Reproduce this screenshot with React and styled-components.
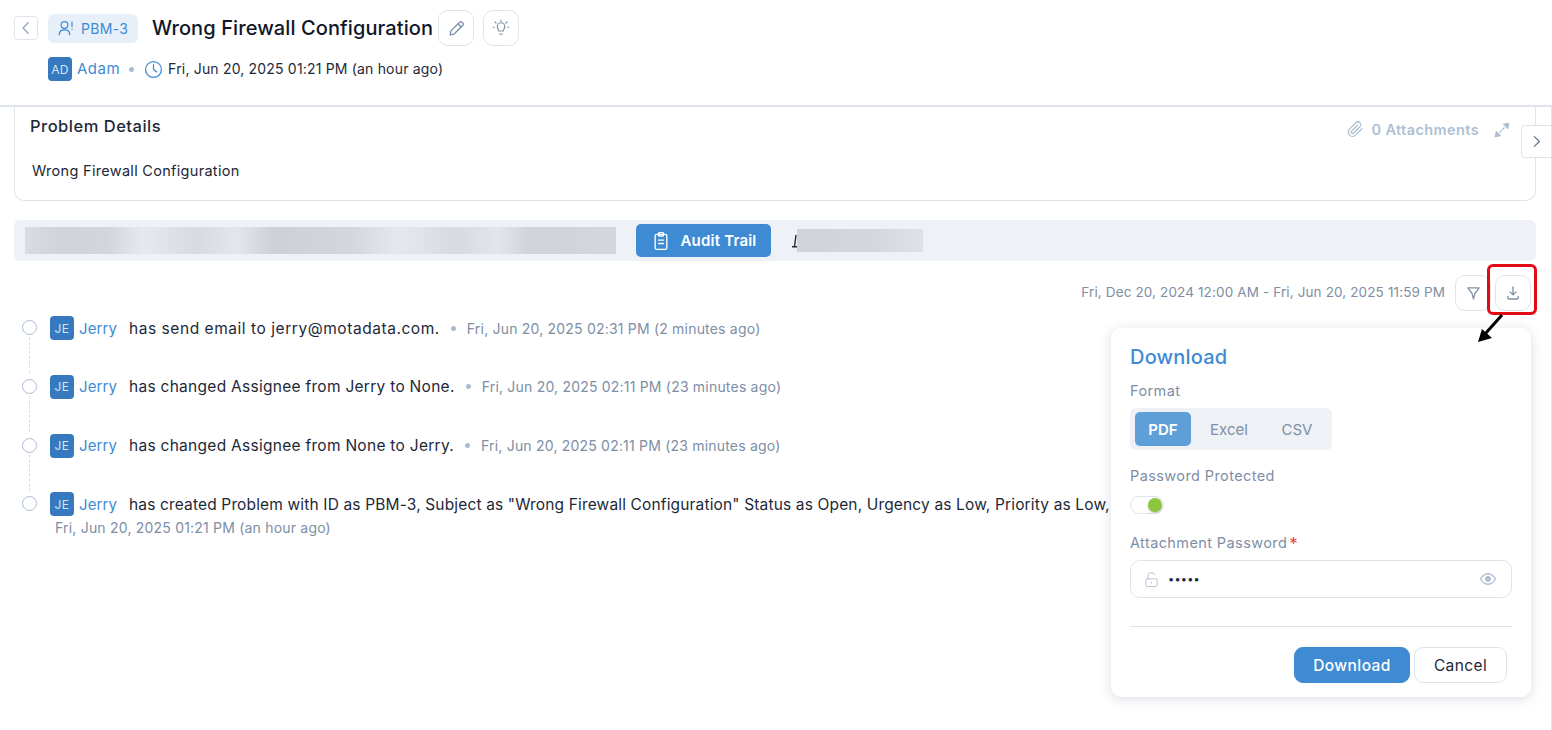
import React from 'react'
import styled, { createGlobalStyle } from 'styled-components'

const GlobalStyle = createGlobalStyle`
html, body { margin: 0; padding: 0; background: #fff; }
body { font-family: Inter, "Noto Sans", sans-serif; color: #1d2939; overflow: hidden; }
* { box-sizing: border-box; }
`

const Page = styled.div`
  position: relative;
  width: 1552px;
  height: 730px;
  overflow: hidden;
`

const Header = styled.header`
  height: 107px;
  padding: 10px 0 0 14px;
  border-bottom: 2px solid #dfe4ec;
`

const TitleRow = styled.div`
  display: flex;
  align-items: center;
  height: 36px;
`

const BackButton = styled.button`
  width: 24px;
  height: 24px;
  padding: 0;
  margin: 0 10px 0 0;
  display: flex;
  align-items: center;
  justify-content: center;
  background: #fff;
  border: 1px solid #dfe4ec;
  border-radius: 4px;
  color: #8ea0b8;
`

const Badge = styled.div`
  width: 90px;
  height: 29px;
  display: flex;
  align-items: center;
  gap: 6px;
  padding-left: 9px;
  margin-right: 14px;
  background: #e7eff9;
  border-radius: 6px;
  color: #3e8bd4;
  font-size: 14px;
  letter-spacing: 0.3px;
`

const Title = styled.h1`
  margin: 0 5px 0 0;
  font-size: 20px;
  font-weight: 500;
  color: #101828;
  letter-spacing: 0.1px;
  white-space: nowrap;
`

const IconButton = styled.button`
  width: 36px;
  height: 36px;
  margin-left: ${p => p.$gap || 0}px;
  padding: 0;
  display: flex;
  align-items: center;
  justify-content: center;
  background: #fff;
  border: 1px solid #dfe4ec;
  border-radius: 10px;
  color: #7f91a8;
`

const MetaRow = styled.div`
  display: flex;
  align-items: center;
  height: 24px;
  margin: 11px 0 0 34px;
  font-size: 14px;
  color: #1d2939;
`

const MetaDate = styled.span`
  padding-bottom: 2px;
  letter-spacing: 0.18px;
`

const ClockIcon = styled.span`
  display: flex;
  color: #3e8bd4;
  margin-right: 5px;
`

const Avatar = styled.span`
  width: 24px;
  height: 24px;
  flex: none;
  display: inline-flex;
  align-items: center;
  justify-content: center;
  background: #3679bf;
  border-radius: 4px;
  color: #d5e5f5;
  font-size: 12px;
  letter-spacing: 0.4px;
`

const UserName = styled.span`
  color: #3e8bd4;
  font-size: 15px;
  margin-left: 5px;
  letter-spacing: ${p => (p.$wide ? 0.5 : 0.1)}px;
  padding-bottom: ${p => (p.$wide ? 2 : 0)}px;
`

const Dot = styled.span`
  width: 5px;
  height: 5px;
  flex: none;
  border-radius: 50%;
  background: #a9bcd3;
  margin: 0 ${p => p.$right || 10}px 0 ${p => p.$left || 9}px;
`

const Content = styled.main`
  height: 623px;
  padding: 0 15px 0 14px;
  border-right: 1px solid #dfe4ec;
`

const DetailsCard = styled.section`
  height: 94px;
  padding: 8px 25px 0 15px;
  border: 1px solid #dfe4ec;
  border-top: 0;
  border-radius: 0 0 10px 10px;
`

const DetailsHead = styled.div`
  display: flex;
  align-items: center;
  justify-content: space-between;
  height: 22px;
`

const DetailsTitle = styled.h2`
  margin: 0;
  font-size: 16.5px;
  font-weight: 500;
  letter-spacing: 0.5px;
  color: #1d2939;
`

const Attachments = styled.div`
  display: flex;
  align-items: center;
  gap: 7px;
  margin-top: 7px;
  color: #aebfd4;
  font-size: 14.5px;
  font-weight: 600;
  letter-spacing: 0.4px;
`

const ExpandIcon = styled.span`
  display: flex;
  margin-left: 8px;
  color: #aebfd4;
`

const DetailsText = styled.p`
  margin: 24px 0 0 2px;
  font-size: 14.5px;
  line-height: 20px;
  letter-spacing: 0.3px;
  color: #1d2939;
`

const TabBar = styled.nav`
  display: flex;
  align-items: center;
  height: 41px;
  margin-top: 19px;
  padding-left: 11px;
  background: #eef1f6;
  border-radius: 6px;
`

const BlurredTabs = styled.div`
  width: 591px;
  height: 27px;
  background: linear-gradient(90deg,
    #d9dce1 0%, #d1d4d9 5%, #d2d5da 14%, #e6e9ef 20%, #d7dadf 29%, #e3e6ec 36%,
    #cdd1d6 42%, #d3d6db 55%, #e5e8ee 63%, #d7dadf 73%, #e3e6ec 80%, #d0d3d8 85%, #d3d6da 100%);
`

const AuditButton = styled.button`
  width: 135px;
  height: 33px;
  margin-left: 20px;
  display: flex;
  align-items: center;
  justify-content: center;
  gap: 10px;
  padding: 0;
  background: #3e8bd4;
  border: 0;
  border-radius: 5px;
  color: #fff;
  font: 600 15px Inter, sans-serif;
  letter-spacing: 0.2px;
`

const ObscuredGlyph = styled.svg`
  flex: none;
  margin-left: 21px;
`

const BlurredTab = styled.div`
  width: 126px;
  height: 23px;
  background: linear-gradient(90deg, #d0d3d8, #d3d6db 60%, #dfe2e6);
`

const FilterRow = styled.div`
  display: flex;
  align-items: center;
  justify-content: flex-end;
  height: 36px;
  margin-top: 14px;
  padding-right: 5px;
`

const DateRange = styled.span`
  margin-right: 10px;
  padding-bottom: 2px;
  font-size: 13.5px;
  letter-spacing: 0.13px;
  color: #7d8ea5;
`

const Timeline = styled.ul`
  list-style: none;
  margin: 5.3px 0 0;
  padding: 0 0 0 8px;
`

const Entry = styled.li`
  position: relative;
  height: 58.7px;
  padding-left: 28px;
  &:not(:last-child)::after {
    content: '';
    position: absolute;
    left: 7px;
    top: 21px;
    height: 36px;
    border-left: 1px dashed #d8dee7;
  }
`

const Ring = styled.span`
  position: absolute;
  left: 0;
  top: 4px;
  width: 15px;
  height: 15px;
  border: 1px solid #a9bcd3;
  border-radius: 50%;
`

const EntryLine = styled.div`
  display: flex;
  align-items: center;
  height: 24px;
  font-size: 15.5px;
  white-space: nowrap;
`

const EntryText = styled.span`
  margin-left: 12px;
  letter-spacing: ${p => p.$track}px;
  color: #1d2939;
`

const Stamp = styled.span`
  font-size: 14px;
  letter-spacing: 0.2px;
  color: #7d8ea5;
`

const WrappedStamp = styled(Stamp)`
  display: block;
  margin: 3px 0 0 5px;
`

const Popover = styled.aside`
  position: absolute;
  left: 1111px;
  top: 328px;
  width: 420px;
  height: 369px;
  padding: 17px 19px 0 19px;
  background: #fff;
  border-radius: 10px;
  box-shadow: 0 2px 12px rgba(40, 60, 90, 0.18);
`

const PopoverTitle = styled.h3`
  margin: 0;
  font-size: 20px;
  line-height: 24px;
  font-weight: 500;
  letter-spacing: 0.2px;
  color: #3e8bd4;
`

const FieldLabel = styled.div`
  margin-top: ${p => p.$top}px;
  font-size: 14.5px;
  line-height: 20px;
  letter-spacing: 0.4px;
  color: #7d8ea5;
`

const Required = styled.span`
  color: #e5484d;
  margin-left: 2px;
  font-size: 17px;
  line-height: 14px;
  vertical-align: -2px;
`

const Segments = styled.div`
  display: flex;
  width: 202px;
  height: 42px;
  margin-top: 7px;
  padding: 4px 5px;
  background: #eef1f6;
  border-radius: 6px;
`

const Segment = styled.div`
  width: ${p => p.$width}px;
  display: flex;
  align-items: center;
  justify-content: center;
  border-radius: 5px;
  font-size: 15px;
  font-weight: ${p => (p.$active ? 600 : 400)};
  background: ${p => (p.$active ? '#5f9fd9' : 'transparent')};
  color: ${p => (p.$active ? '#fff' : '#7d8ea5')};
`

const Switch = styled.div`
  position: relative;
  width: 34px;
  height: 18px;
  margin-top: 10px;
  background: #fff;
  border: 1px solid #dfe4ec;
  border-radius: 9px;
  &::after {
    content: '';
    position: absolute;
    right: 1px;
    top: 1px;
    width: 14px;
    height: 14px;
    border-radius: 50%;
    background: #8cc63f;
    box-shadow: 0 1px 2px rgba(0, 0, 0, 0.25);
  }
`

const PasswordField = styled.div`
  display: flex;
  align-items: center;
  height: 38px;
  margin-top: 7px;
  padding: 0 14px 0 12px;
  border: 1px solid #dfe4ec;
  border-radius: 10px;
  color: #aebfd4;
`

const PasswordDots = styled.span`
  flex: 1;
  margin-left: 8px;
  font-size: 11px;
  letter-spacing: 0.2px;
  color: #1d2939;
`

const Divider = styled.hr`
  margin: 28px 0 0;
  border: 0;
  border-top: 1px solid #dfe4ec;
`

const Actions = styled.div`
  display: flex;
  justify-content: flex-end;
  gap: 4px;
  margin-top: 20px;
  padding-right: 5px;
`

const ActionButton = styled.button`
  width: ${p => p.$width}px;
  height: 36px;
  padding: 0;
  border-radius: 9px;
  font: ${p => (p.$primary ? 500 : 400)} 15.5px Inter, sans-serif;
  letter-spacing: 0.4px;
  border: 1px solid ${p => (p.$primary ? '#3e8bd4' : '#dfe4ec')};
  background: ${p => (p.$primary ? '#3e8bd4' : '#fff')};
  color: ${p => (p.$primary ? '#fff' : '#1d2939')};
`

const DrawerToggle = styled.button`
  position: absolute;
  right: 1px;
  top: 125px;
  width: 30px;
  height: 33px;
  padding: 0;
  display: flex;
  align-items: center;
  justify-content: center;
  background: #fff;
  border: 1px solid #dfe4ec;
  border-right: 0;
  border-radius: 4px 0 0 4px;
  color: #5f7088;
`

const Highlight = styled.div`
  position: absolute;
  left: 1487px;
  top: 264px;
  width: 50px;
  height: 51px;
  border: 3px solid #e30b13;
  border-radius: 6px;
`

const Pointer = styled.svg`
  position: absolute;
  left: 1472px;
  top: 312px;
`

const Svg = ({ size = 16, width = 1.6, children }) => (
  <svg width={size} height={size} viewBox="0 0 24 24" fill="none" stroke="currentColor"
    strokeWidth={width} strokeLinecap="round" strokeLinejoin="round">
    {children}
  </svg>
)

const entries = [
  { track: 0.55, text: 'has send email to jerry@motadata.com.', stamp: 'Fri, Jun 20, 2025 02:31 PM (2 minutes ago)' },
  { track: 0.28, text: 'has changed Assignee from Jerry to None.', stamp: 'Fri, Jun 20, 2025 02:11 PM (23 minutes ago)' },
  { track: 0.28, text: 'has changed Assignee from None to Jerry.', stamp: 'Fri, Jun 20, 2025 02:11 PM (23 minutes ago)' },
  {
    track: 0.15,
    text: 'has created Problem with ID as PBM-3, Subject as "Wrong Firewall Configuration" Status as Open, Urgency as Low, Priority as Low,',
    stamp: 'Fri, Jun 20, 2025 01:21 PM (an hour ago)',
    wrapped: true,
  },
]

const App = () => (
  <Page>
    <GlobalStyle />
    <Header>
      <TitleRow>
        <BackButton>
          <Svg size={18}><path d="M15 5l-7 7 7 7" /></Svg>
        </BackButton>
        <Badge>
          <Svg size={18}>
            <circle cx="10" cy="8" r="4.5" />
            <path d="M3 21c0-4 3-6.500 7-6.500s7 2.500 7 6.500" />
            <path d="M20 4v6M20 13v.5" />
          </Svg>
          PBM-3
        </Badge>
        <Title>Wrong Firewall Configuration</Title>
        <IconButton>
          <Svg size={19} width={1.7}>
            <path d="M4 20l1-5L16 4a2 2 0 0 1 3 0l1 1a2 2 0 0 1 0 3L9 19z" />
            <path d="M14 6l4 4" />
          </Svg>
        </IconButton>
        <IconButton $gap={9}>
          <Svg size={18} width={1.6}>
            <path d="M9 16c0-2-2-3-2-6a5 5 0 0 1 10 0c0 3-2 4-2 6z" />
            <path d="M10 20h4M12 1.500V3M4 4l1.500 1.500M20 4l-1.500 1.500M1.500 11H3M21 11h1.500" />
          </Svg>
        </IconButton>
      </TitleRow>
      <MetaRow>
        <Avatar>AD</Avatar>
        <UserName $wide>Adam</UserName>
        <Dot />
        <ClockIcon>
          <Svg size={19}>
            <circle cx="12" cy="12" r="10" />
            <path d="M12 6v6l4 3" />
          </Svg>
        </ClockIcon>
        <MetaDate>Fri, Jun 20, 2025 01:21 PM (an hour ago)</MetaDate>
      </MetaRow>
    </Header>

    <Content>
      <DetailsCard>
        <DetailsHead>
          <DetailsTitle>Problem Details</DetailsTitle>
          <Attachments>
            <Svg size={17} width={1.8}>
              <path d="M21 11l-9 9a6 6 0 0 1-8.500-8.500l9-9a4 4 0 0 1 5.700 5.700l-9 9a2 2 0 0 1-2.800-2.800l8.300-8.300" />
            </Svg>
            0 Attachments
            <ExpandIcon>
              <Svg size={16} width={2}>
                <path d="M22 2l-7.500 1.500 6 6zM2 22l7.500-1.500-6-6z" fill="currentColor" />
                <path d="M15 9l-2 2M11 13l-2 2" />
              </Svg>
            </ExpandIcon>
          </Attachments>
        </DetailsHead>
        <DetailsText>Wrong Firewall Configuration</DetailsText>
      </DetailsCard>

      <TabBar>
        <BlurredTabs />
        <AuditButton>
          <Svg size={20}>
            <rect x="5" y="4" width="14" height="18" rx="2" />
            <rect x="9" y="2" width="6" height="4" rx="1" />
            <path d="M9 11h6M9 15h6" />
          </Svg>
          Audit Trail
        </AuditButton>
        <ObscuredGlyph width="5" height="14" viewBox="0 0 5 14">
          <path d="M4 1L2.500 12.500M0 12.800h5" stroke="#1d2939" strokeWidth="1.400" fill="none" />
        </ObscuredGlyph>
        <BlurredTab />
      </TabBar>

      <FilterRow>
        <DateRange>Fri, Dec 20, 2024 12:00 AM - Fri, Jun 20, 2025 11:59 PM</DateRange>
        <IconButton>
          <Svg size={17} width={1.8}><path d="M4 4h16l-6 8-2 8-2-8z" /></Svg>
        </IconButton>
        <IconButton $gap={4}>
          <Svg size={18} width={1.8}>
            <path d="M12 4v10M8 10.500l4 4 4-4M5 16.500v1a2.500 2.500 0 0 0 2.500 2.500h9a2.500 2.500 0 0 0 2.500-2.500v-1" />
          </Svg>
        </IconButton>
      </FilterRow>

      <Timeline>
        {entries.map(e => (
          <Entry key={e.stamp + e.text}>
            <Ring />
            <EntryLine>
              <Avatar>JE</Avatar>
              <UserName>Jerry</UserName>
              <EntryText $track={e.track}>{e.text}</EntryText>
              {!e.wrapped && <Dot $left={11} $right={11} />}
              {!e.wrapped && <Stamp>{e.stamp}</Stamp>}
            </EntryLine>
            {e.wrapped && <WrappedStamp>{e.stamp}</WrappedStamp>}
          </Entry>
        ))}
      </Timeline>
    </Content>

    <DrawerToggle>
      <Svg size={17}><path d="M9 5l7 7-7 7" /></Svg>
    </DrawerToggle>

    <Popover>
      <PopoverTitle>Download</PopoverTitle>
      <FieldLabel $top={12}>Format</FieldLabel>
      <Segments>
        <Segment $active $width={56}>PDF</Segment>
        <Segment $width={76}>Excel</Segment>
        <Segment $width={60}>CSV</Segment>
      </Segments>
      <FieldLabel $top={16}>Password Protected</FieldLabel>
      <Switch />
      <FieldLabel $top={19}>Attachment Password<Required>*</Required></FieldLabel>
      <PasswordField>
        <Svg size={17} width={1.3}>
          <rect x="4" y="11" width="16" height="11" rx="2" />
          <path d="M7 11V7a5 5 0 0 1 9.500-2M12 16v1" />
        </Svg>
        <PasswordDots>•••••</PasswordDots>
        <Svg size={18} width={1.7}>
          <path d="M2 12s4-7 10-7 10 7 10 7-4 7-10 7-10-7-10-7z" />
          <circle cx="12" cy="12" r="3" fill="currentColor" />
        </Svg>
      </PasswordField>
      <Divider />
      <Actions>
        <ActionButton $primary $width={116}>Download</ActionButton>
        <ActionButton $width={93}>Cancel</ActionButton>
      </Actions>
    </Popover>

    <Highlight />
    <Pointer width="40" height="36" viewBox="0 0 40 36">
      <path d="M30 3L13 22" stroke="#000" strokeWidth="3" />
      <path d="M6 30l4-13 10 9z" fill="#000" />
    </Pointer>
  </Page>
)

export default App
